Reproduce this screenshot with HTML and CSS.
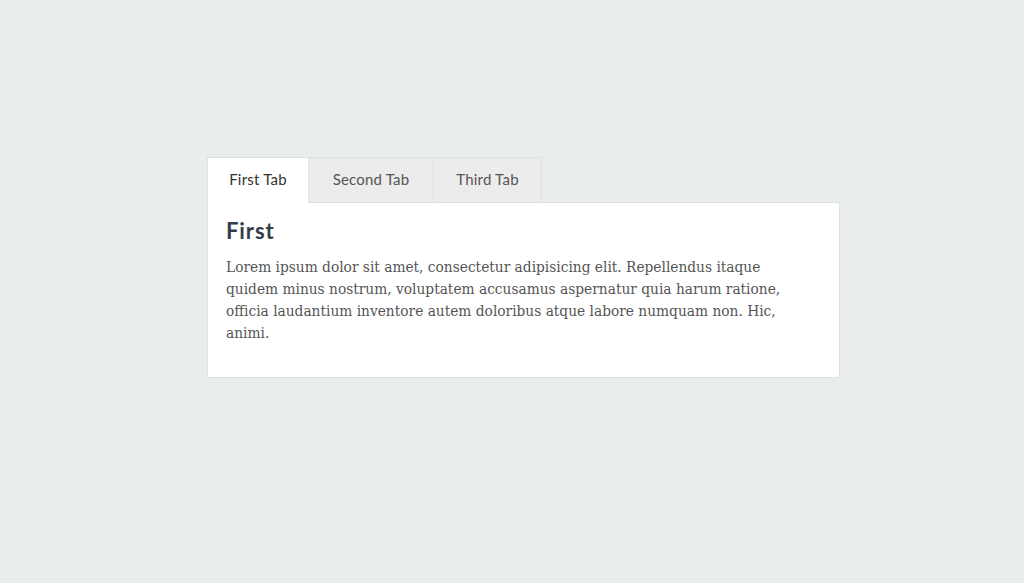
FILE: index.html
```html
<!DOCTYPE html>
<html>
<head>
	<title>Tabs</title>
	<meta charset="utf-8" />
	<link rel="stylesheet" href="styles.css">
</head>
<body>
	<div class="tabs">
		<ul class="tab-list">
			<li class="tab tab-first active">First Tab</li>
			<li class="tab tab-second">Second Tab</li>
			<li class="tab tab-third">Third Tab</li>
		</ul>
		<div class="tab-panel">
			<h2>First</h2>
			<p>Lorem ipsum dolor sit amet, consectetur adipisicing elit. Repellendus itaque quidem minus nostrum, voluptatem accusamus aspernatur quia harum ratione, officia laudantium inventore autem doloribus atque labore numquam non. Hic, animi.</p>
		</div>
	</div>
</body>
</html>
```

FILE: styles.css
```css
/* general styles */
* { box-sizing: border-box; }
body { margin: 0; background-color: #e9edee; font-family: Lato, sans-serif; }
/* tabs */
.tabs { width: 633px; margin: 157px 0 0 207px; }
.tab-list { display: flex; list-style: none; margin: 0; padding: 0; }
.tab { height: 46px; line-height: 42px; text-align: center; font-size: 15px; letter-spacing: 0.2px; color: #555; background-color: #ececec; border: 1px solid #dfe1e1; border-left: none; margin-bottom: -1px; }
.tab-first { width: 102px; border-left: 1px solid #dfe1e1; }
.tab-second { width: 125px; }
.tab-third { width: 108px; }
.tab.active { background-color: #fff; color: #333; border-bottom-color: #fff; }
.tab-panel { background-color: #fff; border: 1px solid #dfe1e1; padding: 14px 33px 33px 18px; }
.tab-panel h2 { margin: 0 0 12px; font-size: 22px; font-weight: bold; letter-spacing: 0.9px; color: #343d4b; }
.tab-panel p { margin: 0; font-family: "DejaVu Serif Condensed", "DejaVu Serif", serif; font-size: 15.3px; line-height: 22px; color: #555; }
```
